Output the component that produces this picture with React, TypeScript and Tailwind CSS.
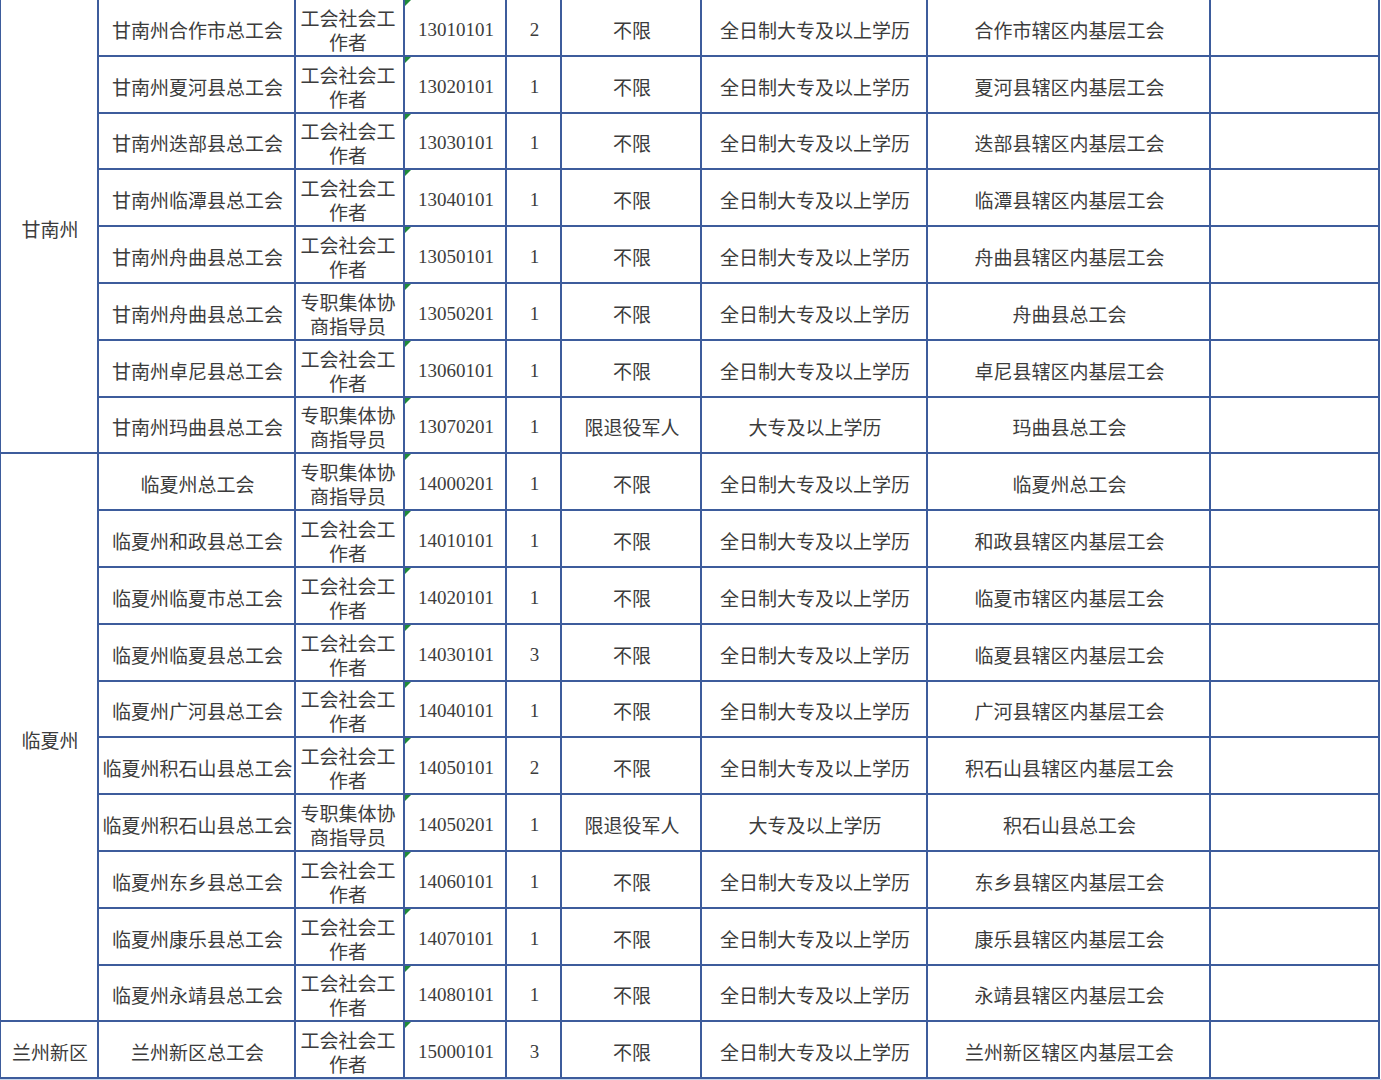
import React from "react";

type Row = [string, string, string, string, string, string, string];

const W = (a: string, b: string, c: string, n: string, lim: string, edu: string, place: string): Row => [a, b, c, n, lim, edu, place];

const SG = "工会社会工作者";
const XS = "专职集体协商指导员";
const QR = "全日制大专及以上学历";
const DZ = "大专及以上学历";

const rows: Row[] = [
  W("甘南州合作市总工会", SG, "13010101", "2", "不限", QR, "合作市辖区内基层工会"),
  W("甘南州夏河县总工会", SG, "13020101", "1", "不限", QR, "夏河县辖区内基层工会"),
  W("甘南州迭部县总工会", SG, "13030101", "1", "不限", QR, "迭部县辖区内基层工会"),
  W("甘南州临潭县总工会", SG, "13040101", "1", "不限", QR, "临潭县辖区内基层工会"),
  W("甘南州舟曲县总工会", SG, "13050101", "1", "不限", QR, "舟曲县辖区内基层工会"),
  W("甘南州舟曲县总工会", XS, "13050201", "1", "不限", QR, "舟曲县总工会"),
  W("甘南州卓尼县总工会", SG, "13060101", "1", "不限", QR, "卓尼县辖区内基层工会"),
  W("甘南州玛曲县总工会", XS, "13070201", "1", "限退役军人", DZ, "玛曲县总工会"),
  W("临夏州总工会", XS, "14000201", "1", "不限", QR, "临夏州总工会"),
  W("临夏州和政县总工会", SG, "14010101", "1", "不限", QR, "和政县辖区内基层工会"),
  W("临夏州临夏市总工会", SG, "14020101", "1", "不限", QR, "临夏市辖区内基层工会"),
  W("临夏州临夏县总工会", SG, "14030101", "3", "不限", QR, "临夏县辖区内基层工会"),
  W("临夏州广河县总工会", SG, "14040101", "1", "不限", QR, "广河县辖区内基层工会"),
  W("临夏州积石山县总工会", SG, "14050101", "2", "不限", QR, "积石山县辖区内基层工会"),
  W("临夏州积石山县总工会", XS, "14050201", "1", "限退役军人", DZ, "积石山县总工会"),
  W("临夏州东乡县总工会", SG, "14060101", "1", "不限", QR, "东乡县辖区内基层工会"),
  W("临夏州康乐县总工会", SG, "14070101", "1", "不限", QR, "康乐县辖区内基层工会"),
  W("临夏州永靖县总工会", SG, "14080101", "1", "不限", QR, "永靖县辖区内基层工会"),
  W("兰州新区总工会", SG, "15000101", "3", "不限", QR, "兰州新区辖区内基层工会"),
];

const cell =
  "flex items-center justify-center text-center border-r-2 border-b-2 border-[#3d5c9c] pt-[5px] pl-[2px] leading-[24px] text-[#3c3c3c]";

const groups = [
  { name: "甘南州", span: "row-span-8" },
  { name: "临夏州", span: "row-span-10" },
  { name: "兰州新区", span: "row-span-1" },
];

export default function App() {
  const cells: React.ReactNode[] = [];
  let gi = 0;
  rows.forEach((r, i) => {
    if (i === 0 || i === 8 || i === 18) {
      const g = groups[gi++];
      cells.push(
        <div key={`g${i}`} className={`${cell} ${g.span} border-l-2`}>
          {g.name}
        </div>
      );
    }
    cells.push(
      <div key={`a${i}`} className={`${cell} whitespace-nowrap`}>{r[0]}</div>,
      <div key={`b${i}`} className={`${cell} px-[5px]`}>{r[1]}</div>,
      <div key={`c${i}`} className={`${cell} relative font-['Liberation_Serif',serif]`}>
        <span className="absolute left-0 top-0 w-0 h-0 border-t-[6px] border-r-[6px] border-t-[#1f8a3a] border-r-transparent" />
        {r[2]}
      </div>,
      <div key={`d${i}`} className={`${cell} font-['Liberation_Serif',serif]`}>{r[3]}</div>,
      <div key={`e${i}`} className={cell}>{r[4]}</div>,
      <div key={`f${i}`} className={cell}>{r[5]}</div>,
      <div key={`h${i}`} className={cell}>{r[6]}</div>,
      <div key={`i${i}`} className={cell}></div>
    );
  });

  return (
    <div className="w-[1381px] h-[1080px] bg-white overflow-hidden font-['Noto_Sans_CJK_SC','Liberation_Serif',sans-serif] text-[19px]">
      <div className="ml-[-1px] grid grid-cols-[100px_197px_109px_102px_55px_140px_226px_283px_169px] grid-rows-[repeat(19,56.8px)] w-[1381px]">
        {cells}
      </div>
      <div className="w-[1381px] h-[2px] bg-[#c9d7ec]" />
    </div>
  );
}
